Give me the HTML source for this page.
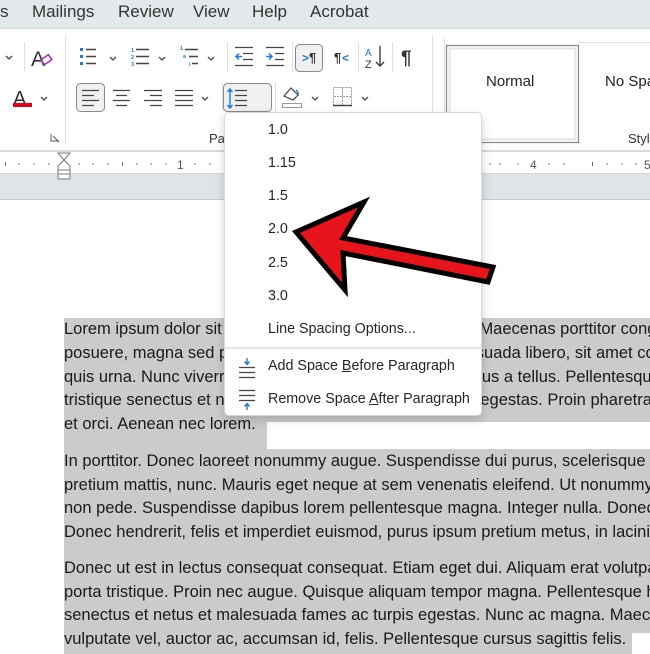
<!DOCTYPE html>
<html><head><meta charset="utf-8"><style>
*{margin:0;padding:0;box-sizing:border-box}
body{width:650px;height:654px;overflow:hidden;position:relative;background:#fff;font-family:"Liberation Sans",sans-serif;color:#222}
.abs{position:absolute}
.tab{position:absolute;top:2px;font-size:17px;color:#333}
.clip{position:absolute;left:64px;top:0;width:586px;height:654px;overflow:hidden}
.doc{position:absolute;left:0;font-size:16.5px;white-space:nowrap;color:#1a1a1a;letter-spacing:0}
.mi{position:absolute;left:268px;font-size:14.3px;color:#262626}
</style></head><body>
<div class="abs" style="left:0;top:0;width:650px;height:29px;background:#e3e8eb;border-bottom:1px solid #d0d5d9"></div>
<div class="tab" style="left:0">s</div>
<div class="tab" style="left:32px">Mailings</div>
<div class="tab" style="left:118px">Review</div>
<div class="tab" style="left:193px">View</div>
<div class="tab" style="left:252px">Help</div>
<div class="tab" style="left:310px">Acrobat</div>
<div class="abs" style="left:0;top:30px;width:650px;height:120px;background:#fff"></div>
<div class="abs" style="left:0;top:150px;width:650px;height:2px;background:#d6dadd"></div>
<div class="abs" style="left:0;top:152px;width:650px;height:21px;background:#fff"></div>
<div class="abs" style="left:0;top:173px;width:650px;height:27px;background:#dfe4e7;border-top:1px solid #d2d6d9;border-bottom:1px solid #c8ccd0"></div>
<svg class="abs" style="left:0;top:150px" width="650" height="35">
<g fill="#666">
<rect x="5" y="12" width="1" height="4"/><circle cx="19" cy="14" r="0.8"/><circle cx="34" cy="14" r="0.8"/><circle cx="49" cy="14" r="0.8"/>
<circle cx="79" cy="14" r="0.8"/><circle cx="93" cy="14" r="0.8"/><circle cx="108" cy="14" r="0.8"/><rect x="122" y="12" width="1" height="4"/>
<circle cx="137" cy="14" r="0.8"/><circle cx="151" cy="14" r="0.8"/><circle cx="166" cy="14" r="0.8"/>
<circle cx="195" cy="14" r="0.8"/><circle cx="210" cy="14" r="0.8"/>
<circle cx="490" cy="14" r="0.8"/><circle cx="500" cy="14" r="0.8"/><circle cx="518" cy="14" r="0.8"/><circle cx="549" cy="14" r="0.8"/><circle cx="564" cy="14" r="0.8"/><rect x="592" y="12" width="1" height="4"/><circle cx="607" cy="14" r="0.8"/><circle cx="622" cy="14" r="0.8"/><circle cx="636" cy="14" r="0.8"/>
</g>
<text x="177" y="19" font-size="12" fill="#555" font-family="Liberation Sans">1</text>
<text x="530" y="19" font-size="12" fill="#555" font-family="Liberation Sans">4</text>
<text x="644" y="19" font-size="12" fill="#555" font-family="Liberation Sans">5</text>
<path d="M58 3h12l-6 7zM64 10l-6 6v4h12v-4zM58 20v9h12v-9M58 24h12" fill="#fff" stroke="#777" stroke-width="1"/>
</svg>
<svg class="abs" style="left:0;top:30px" width="650" height="120" font-family="Liberation Sans">
<g stroke="#444" fill="none" stroke-width="1.3">
<path d="M6 26l3 3 3-3M41 67l3 3 3-3M110 27l3 3 3-3M159 27l3 3 3-3M208 27l3 3 3-3M202 67l3 3 3-3M256 67l3 3 3-3M312 67l3 3 3-3M362 67l3 3 3-3"/>
</g>
<g stroke="#e0e0e0" stroke-width="1"><path d="M24.5 12v30M65.5 5v110M227.5 12v30M292.5 12v30M358.5 12v30M392.5 12v30M432.5 5v110M222.5 52v30M275.5 52v30"/></g>
<text x="31" y="36" font-size="21" fill="#333">A</text>
<rect x="42" y="27" width="9" height="6" transform="rotate(-35 46 30)" fill="none" stroke="#a23bb5" stroke-width="1.6"/>
<text x="13" y="75" font-size="20" fill="#333">A</text>
<rect x="13" y="73" width="19" height="4" fill="#e3001b"/>
<g fill="#1e7ad2"><rect x="80" y="18" width="3" height="3"/><rect x="80" y="25" width="3" height="3"/><rect x="80" y="32" width="3" height="3"/></g>
<g stroke="#444" stroke-width="1.4"><path d="M86 19.5h10M86 26.5h10M86 33.5h10M136 19.5h13M136 26.5h13M136 33.5h13M185 19.5h13M189 26.5h9M192 33.5h6"/></g>
<g fill="#1e7ad2" font-size="5.5" font-weight="bold"><text x="131" y="22">1</text><text x="131" y="29">2</text><text x="131" y="36">3</text><text x="180" y="20">1</text><text x="183" y="28">a</text><text x="189" y="36">i</text></g>
<g stroke="#444" stroke-width="1.3"><path d="M235 17.5h18M243 23.5h10M243 29.5h10M235 35.5h18M266 17.5h18M275 23.5h9M275 29.5h9M266 35.5h18"/></g>
<g stroke="#1e7ad2" stroke-width="1.5" fill="none"><path d="M236 26.5h6M239 23.5l-3 3 3 3M266 26.5h6M269 23.5l3 3-3 3"/></g>
<rect x="295.5" y="14.5" width="27" height="27" rx="4" fill="#f0f0f0" stroke="#8a8a8a"/>
<text x="302" y="32" font-size="12" fill="#1e7ad2" font-weight="bold">&gt;</text><text x="309" y="32" font-size="13" fill="#333" font-weight="bold">¶</text>
<text x="334" y="32" font-size="13" fill="#333" font-weight="bold">¶</text><text x="342" y="32" font-size="12" fill="#1e7ad2" font-weight="bold">&lt;</text>
<text x="365" y="26" font-size="10" fill="#1e7ad2">A</text><text x="365" y="38" font-size="11" fill="#333">Z</text>
<path d="M380 16v20M376 32l4 4 4-4" stroke="#333" stroke-width="1.3" fill="none"/>
<text x="401" y="34" font-size="19" fill="#333" font-weight="bold">¶</text>
<rect x="76.5" y="53.5" width="28" height="28" rx="4" fill="#f0f0f0" stroke="#8a8a8a"/>
<g stroke="#444" stroke-width="1.3">
<path d="M82 60.5h17M82 65.5h12M82 70.5h17M82 75.5h12"/>
<path d="M113 60.5h17M116 65.5h11M113 70.5h17M116 75.5h11"/>
<path d="M144 60.5h18M150 65.5h12M144 70.5h18M150 75.5h12"/>
<path d="M175 60.5h18M175 65.5h18M175 70.5h18M175 75.5h18"/>
</g>
<rect x="223.5" y="53.5" width="48" height="28" rx="4" fill="#f0f0f0" stroke="#8a8a8a"/>
<g stroke="#444" stroke-width="1.3"><path d="M235 60.5h12M235 65.5h12M235 70.5h12M235 75.5h12"/></g>
<g stroke="#1e7ad2" stroke-width="1.4" fill="none"><path d="M230 59v19M227.5 62l2.5-3 2.5 3M227.5 75l2.5 3 2.5-3"/></g>
<path d="M284 66l7-8 7 7-5 5z" fill="none" stroke="#444" stroke-width="1.2"/><path d="M296 60q3 2 2 6" stroke="#1e7ad2" stroke-width="1.5" fill="none"/>
<rect x="282.5" y="73.5" width="19" height="4" fill="#fff" stroke="#999"/>
<rect x="333.5" y="57.5" width="18" height="18" fill="none" stroke="#999" stroke-dasharray="2 1"/>
<path d="M342.5 58v18M334 66.5h18" stroke="#999" stroke-dasharray="2 1"/><path d="M333 75.5h19" stroke="#444" stroke-width="1.4"/>
<text x="209" y="113" font-size="13" fill="#333">Pa</text>
<text x="628" y="113" font-size="13" fill="#333">Styl</text>
<path d="M51 104v7h8M53 106l6 6" stroke="#555" fill="none"/>
<path d="M444.5 8v110" stroke="#e0e0e0"/>
<rect x="446.5" y="15.5" width="132" height="97" fill="#fff" stroke="#888" stroke-width="1.2"/>
<rect x="449.5" y="18.5" width="126" height="91" fill="none" stroke="#e4e4e4" stroke-width="2"/>
<text x="486" y="56" font-size="15" fill="#222">Normal</text>
<text x="605" y="56" font-size="15" fill="#222">No Spa</text>
<path d="M579 12.5h71" stroke="#e0e0e0"/>
</svg>
<div class="abs" style="left:64px;top:318px;width:586px;height:336px;background:#cbcbcb"></div>
<div class="abs" style="left:267px;top:422px;width:383px;height:27px;background:#fff"></div>
<div class="abs" style="left:632px;top:633px;width:18px;height:21px;background:#fff"></div>
<div class="clip">
<div class="doc" style="top:320px">Lorem ipsum dolor sit amet, consectetuer adipiscing elit. Maecenas porttitor congue massa.</div>
<div class="doc" style="top:344px">posuere, magna sed pulvinar ultricies, purus lectus malesuada libero, sit amet commodo</div>
<div class="doc" style="top:368px">quis urna. Nunc viverra imperdiet enim. Fusce est. Vivamus a tellus. Pellentesque habitant</div>
<div class="doc" style="top:391px">tristique senectus et netus et malesuada fames ac turpis egestas. Proin pharetra nonummy</div>
<div class="doc" style="top:415px">et orci. Aenean nec lorem.</div>
<div class="doc" style="top:452px">In porttitor. Donec laoreet nonummy augue. Suspendisse dui purus, scelerisque at</div>
<div class="doc" style="top:476px">pretium mattis, nunc. Mauris eget neque at sem venenatis eleifend. Ut nonummy.</div>
<div class="doc" style="top:499px">non pede. Suspendisse dapibus lorem pellentesque magna. Integer nulla. Donec blandit</div>
<div class="doc" style="top:523px">Donec hendrerit, felis et imperdiet euismod, purus ipsum pretium metus, in lacinia</div>
<div class="doc" style="top:559px">Donec ut est in lectus consequat consequat. Etiam eget dui. Aliquam erat volutpat.</div>
<div class="doc" style="top:583px">porta tristique. Proin nec augue. Quisque aliquam tempor magna. Pellentesque habitant</div>
<div class="doc" style="top:606px">senectus et netus et malesuada fames ac turpis egestas. Nunc ac magna. Maecenas</div>
<div class="doc" style="top:630px">vulputate vel, auctor ac, accumsan id, felis. Pellentesque cursus sagittis felis.</div>
</div>
<div class="abs" style="left:224px;top:112px;width:258px;height:304px;background:#fff;border:1px solid #d8d8d8;border-radius:5px;box-shadow:0 4px 10px rgba(0,0,0,0.18)"></div>
<div class="mi" style="top:122px">1.0</div>
<div class="mi" style="top:155px">1.15</div>
<div class="mi" style="top:188px">1.5</div>
<div class="mi" style="top:221px">2.0</div>
<div class="mi" style="top:255px">2.5</div>
<div class="mi" style="top:288px">3.0</div>
<div class="mi" style="top:321px">Line Spacing Options...</div>
<div class="abs" style="left:225px;top:347px;width:256px;height:2px;background:#e6e6e6"></div>
<div class="mi" style="top:358px">Add Space <u>B</u>efore Paragraph</div>
<div class="mi" style="top:391px">Remove Space <u>A</u>fter Paragraph</div>
<svg class="abs" style="left:236px;top:355px" width="24" height="56">
<g stroke="#444" stroke-width="1.3"><path d="M3 12.5h16M3 17.5h16M3 22.5h16M3 35.5h16M3 40.5h16M3 45.5h16"/></g>
<g stroke="#1e7ad2" stroke-width="1.4" fill="none"><path d="M11 3v6M8.5 6.5l2.5 3 2.5-3M11 55v-6M8.5 51.5l2.5-3 2.5 3"/></g>
</svg>
<svg class="abs" style="left:0;top:0" width="650" height="654">
<path d="M296 232 L364 202 L343 238 L493 267 L488 282 L343 253 L345 290 Z" fill="#e8141b" stroke="#000" stroke-width="5" stroke-linejoin="miter"/>
</svg>
</body></html>
